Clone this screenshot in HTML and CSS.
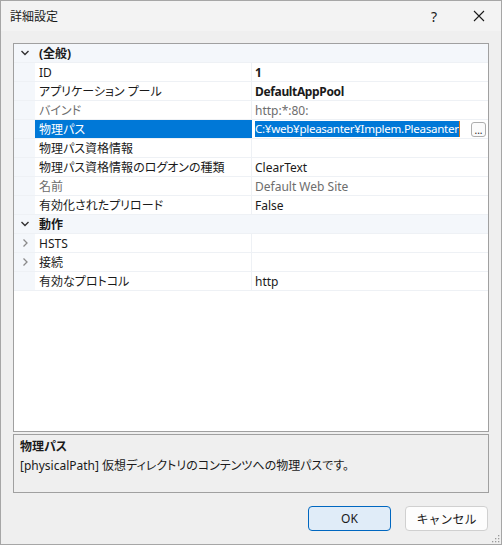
FILE: index.html
```html
<!DOCTYPE html>
<html lang="ja">
<head>
<meta charset="utf-8">
<link rel="stylesheet" href="styles.css">
</head>
<body>
<div class="window">
  <div class="titlebar">
    <span class="title">詳細設定</span>
    <span class="help">?</span>
    <span class="close"><svg width="12" height="12" viewBox="0 0 12 12"><path d="M1 1 L11 11 M11 1 L1 11" stroke="#1a1a1a" stroke-width="1.1" fill="none"/></svg></span>
  </div>
  <div class="content">
    <div class="grid">
      <div class="row cat">
        <span class="gut"><svg width="10" height="8" viewBox="0 0 10 8"><path d="M1.5 2 L5 5.5 L8.5 2" stroke="#333" stroke-width="1.4" fill="none"/></svg></span>
        <span class="catlabel">(全般)</span>
      </div>
      <div class="row"><span class="gut"></span><span class="name">ID</span><span class="val b">1</span></div>
      <div class="row"><span class="gut"></span><span class="name">アプリケーション プール</span><span class="val b">DefaultAppPool</span></div>
      <div class="row"><span class="gut"></span><span class="name dim">バインド</span><span class="val dim">http:*:80:</span></div>
      <div class="row sel"><span class="gut"></span><span class="name">物理パス</span><span class="val edit"><span class="hl">C:¥web¥pleasanter¥Implem.Pleasanter</span><span class="caret"></span><span class="dots">...</span></span></div>
      <div class="row"><span class="gut"></span><span class="name">物理パス資格情報</span><span class="val"></span></div>
      <div class="row"><span class="gut"></span><span class="name">物理パス資格情報のログオンの種類</span><span class="val">ClearText</span></div>
      <div class="row"><span class="gut"></span><span class="name dim">名前</span><span class="val dim">Default Web Site</span></div>
      <div class="row"><span class="gut"></span><span class="name">有効化されたプリロード</span><span class="val">False</span></div>
      <div class="row cat">
        <span class="gut"><svg width="10" height="8" viewBox="0 0 10 8"><path d="M1.5 2 L5 5.5 L8.5 2" stroke="#333" stroke-width="1.4" fill="none"/></svg></span>
        <span class="catlabel">動作</span>
      </div>
      <div class="row"><span class="gut"><svg width="8" height="10" viewBox="0 0 8 10"><path d="M2.5 1.5 L6 5 L2.5 8.5" stroke="#8a8a8a" stroke-width="1.3" fill="none"/></svg></span><span class="name">HSTS</span><span class="val"></span></div>
      <div class="row"><span class="gut"><svg width="8" height="10" viewBox="0 0 8 10"><path d="M2.5 1.5 L6 5 L2.5 8.5" stroke="#8a8a8a" stroke-width="1.3" fill="none"/></svg></span><span class="name">接続</span><span class="val"></span></div>
      <div class="row"><span class="gut"></span><span class="name">有効なプロトコル</span><span class="val">http</span></div>
    </div>
    <div class="desc">
      <div class="desc-title">物理パス</div>
      <div class="desc-text">[physicalPath] 仮想ディレクトリのコンテンツへの物理パスです。</div>
    </div>
    <div class="buttons">
      <button class="btn primary">OK</button>
      <button class="btn">キャンセル</button>
    </div>
  </div>
  <span class="grip"><svg width="8" height="8" viewBox="0 0 8 8" fill="#9a9a9a"><rect x="6" y="0" width="1.3" height="1.3"/><rect x="3" y="3" width="1.3" height="1.3"/><rect x="6" y="3" width="1.3" height="1.3"/><rect x="0" y="6" width="1.3" height="1.3"/><rect x="3" y="6" width="1.3" height="1.3"/><rect x="6" y="6" width="1.3" height="1.3"/></svg></span>
</div>
</body>
</html>
```

FILE: styles.css
```css
* { box-sizing: border-box; }
html, body { margin: 0; padding: 0; }
body {
  font-family: "Noto Sans", "Noto Sans CJK JP", sans-serif;
  font-size: 12px;
  color: #1a1a1a;
  font-feature-settings: "palt";
  background: #efefef;
}
.window {
  position: relative;
  width: 502px;
  height: 545px;
  border: 1px solid #a6a6a6;
  background: #efefef;
  display: flex;
  flex-direction: column;
}
.titlebar {
  height: 30px;
  background: #f3f3f3;
  display: flex;
  align-items: center;
  padding-left: 9px;
}
.title { font-size: 12px; flex: 1; }
.help { width: 14px; font-size: 14px; margin-right: 32px; text-align: center; }
.close { width: 12px; height: 12px; margin-right: 16px; display: flex; }
.content {
  flex: 1;
  padding: 12px 12px 0 12px;
  display: flex;
  flex-direction: column;
}
.grid {
  height: 389px;
  border: 1px solid #a0a0a0;
  background: #fff;
}
.row {
  height: 19px;
  display: flex;
  border-bottom: 1px solid #eef1f5;
  line-height: 19px;
  white-space: nowrap;
}
.gut {
  width: 21px;
  flex: none;
  background: #f4f7fb;
  display: flex;
  align-items: center;
  justify-content: center;
}
.cat { background: #f4f7fb; }
.catlabel { padding-left: 4px; font-weight: bold; }
.name {
  width: 217px;
  flex: none;
  padding-left: 4px;
  border-right: 1px solid #eef1f5;
  overflow: hidden;
}
.val { flex: 1; min-width: 0; padding-left: 3px; overflow: hidden; display: flex; align-items: center; }
.val.b, .b { font-weight: bold; letter-spacing: -0.35px; }
.dim { color: #6d6d6d; }
.sel .name { background: #0078d7; color: #fff; border-right-color: #0078d7; }
.edit { padding-right: 2px; }
.hl {
  background: #0078d7;
  color: #fff;
  line-height: 16px;
  height: 16px;
  font-size: 11.6px;
  letter-spacing: -0.3px;
  font-weight: normal;
  overflow: hidden;
  flex: 0 1 auto;
  min-width: 0;
}
.caret { width: 1px; height: 16px; background: #e0791a; flex: none; margin-right: 8px; }
.dots {
  flex: none;
  margin-left: auto;
  width: 15px;
  height: 15px;
  border: 1px solid #adadad;
  border-radius: 3px;
  font-size: 10px;
  font-weight: normal;
  line-height: 15px;
  text-align: center;
  background: #fbfbfb;
  color: #1a1a1a;
}
.desc {
  margin-top: 2px;
  height: 59px;
  border: 1px solid #a0a0a0;
  background: #efefef;
  padding: 2px 6px;
  line-height: 19px;
}
.desc-title { font-weight: bold; }
.buttons {
  margin-top: 13px;
  display: flex;
  justify-content: flex-end;
  gap: 14px;
  padding-right: 1px;
}
.btn {
  width: 83px;
  height: 25px;
  font-family: "Noto Sans", "Noto Sans CJK JP", sans-serif;
  font-size: 12px;
  color: #1a1a1a;
  border: 1px solid #d0d0d0;
  border-radius: 4px;
  background: #fdfdfd;
  padding: 0;
}
.btn.primary { border: 1px solid #0067c0; background: #e0ecf8; }
.grip { position: absolute; right: 1px; bottom: 1px; display: flex; }
```
